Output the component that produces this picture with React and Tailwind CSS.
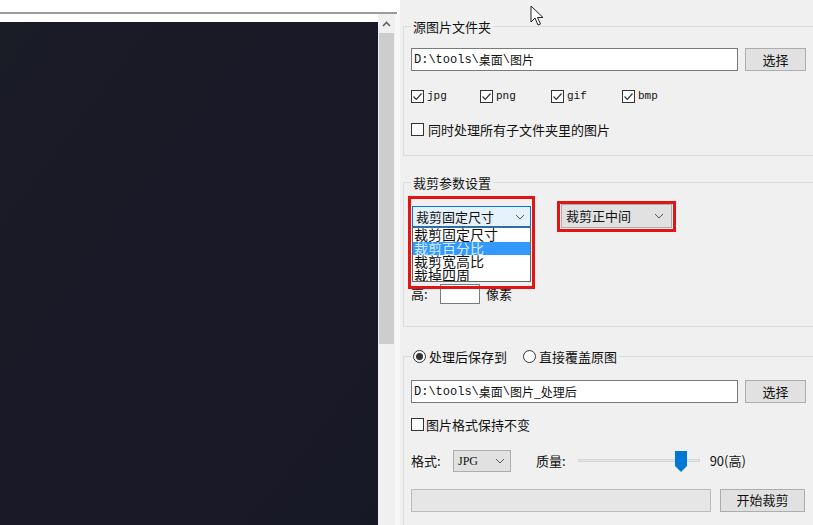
import React from 'react';

const CJK = { fontFamily: '"Noto Sans CJK SC", "Noto Sans", sans-serif' };

function Check({ checked }) {
  return (
    <span className="w-[13px] h-[13px] border border-[#333] bg-white flex items-center justify-center shrink-0">
      {checked && (
        <svg width="11" height="11" viewBox="0 0 11 11">
          <path d="M1.5 5.5 L4.3 8.3 L9.5 2.5" fill="none" stroke="#333" strokeWidth="1.2" />
        </svg>
      )}
    </span>
  );
}

function Radio({ checked }) {
  return (
    <span className="w-[13px] h-[13px] rounded-full border border-[#333] bg-white flex items-center justify-center shrink-0">
      {checked && <span className="w-[7px] h-[7px] rounded-full bg-[#333]" />}
    </span>
  );
}

function Chevron({ color = '#555' }) {
  return (
    <svg width="10" height="6" viewBox="0 0 10 6">
      <path d="M1 1 L5 5 L9 1" fill="none" stroke={color} strokeWidth="1" />
    </svg>
  );
}

function Button({ children, w = 'w-[61px]' }) {
  return (
    <div className={`${w} h-[23px] bg-[#e1e1e1] border border-[#adadad] flex items-center justify-center text-[13px] text-[#111]`}>
      {children}
    </div>
  );
}

function PathBox({ children }) {
  return (
    <div className="w-[327px] h-[23px] bg-white border border-[#7a7a7a] flex items-center pl-[2px] text-[12px] text-[#111]">
      {children}
    </div>
  );
}

const mono = 'font-["Liberation_Mono",monospace]';

export default function App() {
  return (
    <div className="w-[813px] h-[525px] flex overflow-hidden relative bg-[#f0f0f0] text-[#111]" style={CJK}>
      {/* left: image preview */}
      <div className="w-[400px] h-full flex flex-col bg-white">
        <div className="h-[12px]" />
        <div className="h-[2px] w-[397px] bg-[#9c9c9c]" />
        <div className="flex-1 flex min-h-0">
          <div className="w-[378px] pt-[8px] flex flex-col">
            <div className="flex-1 bg-[#191a27] bg-gradient-to-br from-[#1a1c26] via-[#1a1928] to-[#171826]" />
          </div>
          <div className="w-[17px] bg-[#f0f0f0] flex flex-col">
            <div className="h-[19px] flex items-center justify-center">
              <svg width="9" height="6" viewBox="0 0 9 6">
                <path d="M1 5 L4.5 1.5 L8 5" fill="none" stroke="#606060" strokeWidth="1.6" />
              </svg>
            </div>
            <div className="h-[311px] mx-[1px] bg-[#cdcdcd]" />
          </div>
          <div className="w-[5px] bg-[#f7f7f7]" />
        </div>
      </div>

      {/* right: settings */}
      <div className="flex-1 h-full pl-[3px] pt-[18px] flex flex-col overflow-hidden">
        <fieldset className="border border-[#dcdcdc] pl-[7px] pt-[13px] h-[138px] shrink-0 mr-[-20px]">
          <legend className="px-[2px] text-[13px] leading-[17px]">源图片文件夹</legend>
          <div className="flex items-center gap-[7px]">
            <PathBox>
              <span className={mono}>D:\tools\</span>桌面<span className={mono}>\</span>图片
            </PathBox>
            <Button>选择</Button>
          </div>
          <div className="flex items-center mt-[18px] h-[14px]">
            {[['jpg', 'w-[69px]'], ['png', 'w-[71px]'], ['gif', 'w-[71px]'], ['bmp', 'w-[60px]']].map(([t, w]) => (
              <div key={t} className={`${w} flex items-center gap-[3px]`}>
                <Check checked />
                <span className={`${mono} text-[11px]`}>{t}</span>
              </div>
            ))}
          </div>
          <div className="flex items-center gap-[4px] mt-[17px]">
            <Check />
            <span className="text-[13px]">同时处理所有子文件夹里的图片</span>
          </div>
        </fieldset>

        <fieldset className="border border-[#dcdcdc] pl-[7px] pt-[15px] h-[153px] shrink-0 mt-[18px] mr-[-20px]">
          <legend className="px-[2px] text-[13px] leading-[17px]">裁剪参数设置</legend>
          <div className="flex items-start">
            <div className="relative w-[119px] h-[21px] ml-[1px]">
              <div className="h-[21px] bg-[#e5f1fb] border border-[#0078d7] flex items-center justify-between pl-[3px] pr-[5px] text-[13px]">
                <span>裁剪固定尺寸</span>
                <Chevron />
              </div>
              <div className="absolute left-0 top-[21px] w-[119px] h-[55px] bg-white border border-[#646464] flex flex-col text-[14px] leading-[13.5px] overflow-hidden">
                <span className="pl-[1px]">裁剪固定尺寸</span>
                <span className="pl-[1px] bg-[#3399ff] text-[#d6ebff]">裁剪百分比</span>
                <span className="pl-[1px]">裁剪宽高比</span>
                <span className="pl-[1px]">裁掉四周</span>
              </div>
              <div className="absolute left-[-4px] top-[-10px] w-[127px] h-[93px] border-[3px] border-[#e31414] pointer-events-none" />
            </div>
            <div className="relative ml-[30px] mt-[-2px] w-[111px] h-[24px] bg-[#e1e1e1] border border-[#adadad] flex items-center justify-between pl-[4px] pr-[7px] text-[13px]">
              <span>裁剪正中间</span>
              <Chevron />
              <div className="absolute left-[-5px] top-[-4px] w-[119px] h-[31px] border-[3px] border-[#e31414] pointer-events-none" />
            </div>
          </div>
          <div className="flex items-center mt-[56px] h-[20px] text-[13px]">
            <span className="w-[29px]">高:</span>
            <span className="w-[40px] h-[20px] bg-white border border-[#7a7a7a]" />
            <span className="ml-[6px]">像素</span>
          </div>
        </fieldset>

        <fieldset className="border border-[#dcdcdc] pl-[7px] pt-[15px] h-[200px] shrink-0 mt-[21px] mr-[-20px]">
          <legend className="px-[2px] text-[13px] leading-[17px] flex items-center">
            <Radio checked />
            <span className="ml-[3px]">处理后保存到</span>
            <span className="ml-[16px]"><Radio /></span>
            <span className="ml-[3px]">直接覆盖原图</span>
          </legend>
          <div className="flex items-center gap-[7px]">
            <PathBox>
              <span className={mono}>D:\tools\</span>桌面<span className={mono}>\</span>图片_处理后
            </PathBox>
            <Button>选择</Button>
          </div>
          <div className="flex items-center gap-[2px] mt-[12px]">
            <Check />
            <span className="text-[13px]">图片格式保持不变</span>
          </div>
          <div className="flex items-center mt-[15px] h-[22px] text-[13px]">
            <span className="w-[42px]">格式:</span>
            <div className="w-[58px] h-[22px] bg-[#e1e1e1] border border-[#adadad] flex items-center justify-between pl-[4px] pr-[5px]">
              <span className='font-["Liberation_Serif",serif] text-[12px]'>JPG</span>
              <Chevron />
            </div>
            <span className="ml-[25px]">质量:</span>
            <div className="relative ml-[12px] w-[122px] h-[22px] flex items-center">
              <div className="w-full h-[3px] bg-[#e7e7e7] border border-[#d6d6d6]" />
              <svg className="absolute left-[97px] top-[1px]" width="12" height="21" viewBox="0 0 12 21">
                <path d="M0 0 H12 V15 L6 21 L0 15 Z" fill="#0078d7" />
              </svg>
            </div>
            <span className="ml-[10px] text-[13px]">90(高)</span>
          </div>
          <div className="flex items-center gap-[9px] mt-[17px]">
            <div className="w-[300px] h-[23px] bg-[#e6e6e6] border border-[#bcbcbc]" />
            <Button w="w-[85px]">开始裁剪</Button>
          </div>
        </fieldset>
      </div>

      {/* mouse cursor */}
      <svg className="absolute left-[530px] top-[5px]" width="14" height="22" viewBox="0 0 14 22">
        <path d="M1 1 V17 L5 13 L8 20 L10.5 19 L7.5 12.5 L13 12.5 Z" fill="white" stroke="#222" strokeWidth="1" strokeLinejoin="round" />
      </svg>
    </div>
  );
}
